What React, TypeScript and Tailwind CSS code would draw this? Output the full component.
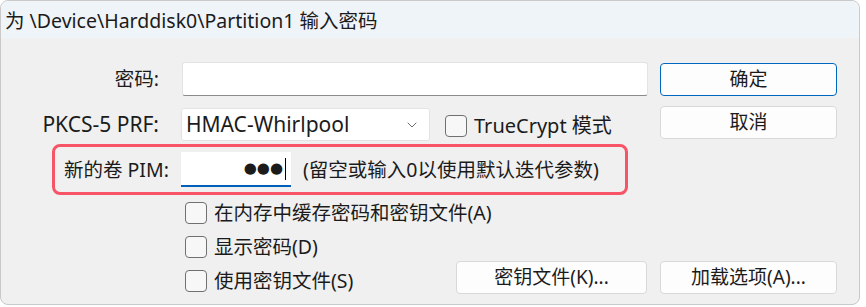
import { ChevronDown } from 'lucide-react'

const FONT = { fontFamily: '"Noto Sans", "Noto Sans CJK SC", sans-serif' }

function Box() {
  return <span className="w-[22px] h-[22px] shrink-0 rounded-[4px] border border-[#707070] bg-[#f7f7f7]" />
}

function Btn({ label, primary, w = 'w-[177px]' }: { label: string; primary?: boolean; w?: string }) {
  return (
    <div
      className={`${w} h-[33px] rounded-[4px] bg-[#fdfdfd] flex items-center justify-center text-[19px] ${
        primary ? 'border border-[#0067c0]' : 'border border-[#d9d9d9]'
      }`}
    >
      {label}
    </div>
  )
}

function Check({ label }: { label: string }) {
  return (
    <div className="flex items-center gap-[7px]">
      <Box />
      <span className="text-[19.5px] leading-none">{label}</span>
    </div>
  )
}

export default function App() {
  return (
    <div className="w-[866px] h-[307px] bg-white text-[#1b1b1b]" style={FONT}>
      <div className="w-[860px] h-[305px] rounded-lg border border-[#c9c9c9] bg-[#f0f0f0] overflow-hidden">
        {/* Title bar */}
        <div className="h-[37px] bg-[#eff4f9] flex items-center px-[4px] pt-[2px] text-[19.5px]">
          为 \Device\Harddisk0\Partition1 输入密码
        </div>

        {/* Password */}
        <div className="flex items-center mt-[24px] h-[34px]">
          <span className="w-[158px] text-right text-[19.5px]">密码:</span>
          <div className="ml-[23px] w-[466px] h-[34px] bg-white rounded-[3px] border border-[#e3e3e3] border-b-[#8a8a8a]" />
          <div className="ml-auto mr-[22px]">
            <Btn label="确定" primary />
          </div>
        </div>

        {/* PRF */}
        <div className="flex items-start mt-[10px] h-[36px]">
          <span className="w-[158px] mt-[3px] text-right text-[21px]">PKCS-5 PRF:</span>
          <div className="ml-[22px] mt-[2px] w-[249px] h-[33px] bg-white rounded-[3px] border border-[#e3e3e3] flex items-center justify-between pl-[4px] pr-[9px] text-[21px]">
            <span>HMAC-Whirlpool</span>
            <ChevronDown size={16} strokeWidth={1.3} className="text-[#555]" />
          </div>
          <div className="ml-[15px] mt-[9px] flex items-center gap-[7px]">
            <Box />
            <span className="text-[20px] leading-none">TrueCrypt 模式</span>
          </div>
          <div className="ml-auto mr-[22px]">
            <Btn label="取消" />
          </div>
        </div>

        {/* PIM */}
        <div className="ml-[51px] mt-[2px] w-[576px] h-[51px] rounded-lg border-[3px] border-[#f85468] flex items-center pl-[9px]">
          <span className="w-[117px] text-[19.5px]">新的卷 PIM:</span>
          <div className="w-[110px] h-[35px] bg-white border-b-2 border-[#005fb8] flex items-center justify-end pr-[5px]">
            <span className="text-[15px] leading-none" style={{ fontFamily: '"DejaVu Sans", sans-serif' }}>
              ●●●
            </span>
            <span className="ml-[2px] w-px h-[22px] bg-black" />
          </div>
          <span className="ml-[12px] text-[19.5px]">(留空或输入0以使用默认迭代参数)</span>
        </div>

        {/* Options */}
        <div className="pl-[184px] mt-[7px] flex flex-col gap-[12px]">
          <Check label="在内存中缓存密码和密钥文件(A)" />
          <Check label="显示密码(D)" />
        </div>
        <div className="flex items-start mt-[3px]">
          <div className="ml-[184px] mt-[9px]">
            <Check label="使用密钥文件(S)" />
          </div>
          <div className="ml-auto mr-[22px] flex gap-[13px]">
            <Btn label="密钥文件(K)..." w="w-[191px]" />
            <Btn label="加载选项(A)..." />
          </div>
        </div>
      </div>
    </div>
  )
}
